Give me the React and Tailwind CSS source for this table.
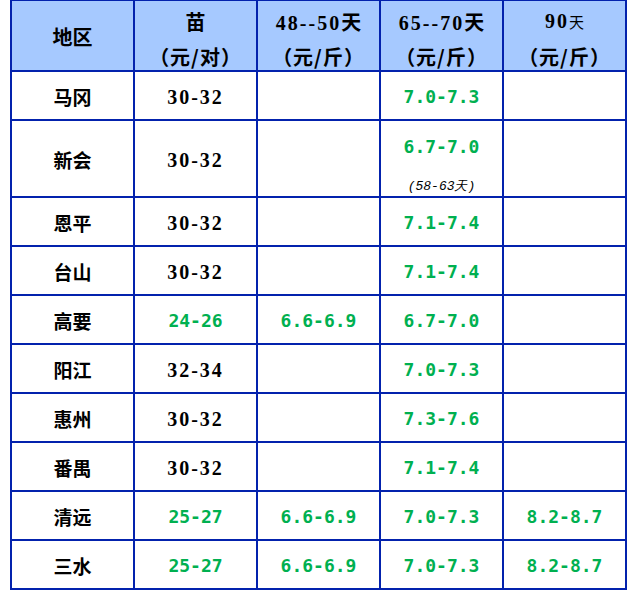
const CJK = '"Noto Sans CJK SC", sans-serif';

const ROWS = [
    { area: '马冈', seed: '30-32', p48: '', p65: '7.0-7.3', p90: '' },
    { area: '新会', seed: '30-32', p48: '', p65: '6.7-7.0', p90: '', note: '(58-63天)' },
    { area: '恩平', seed: '30-32', p48: '', p65: '7.1-7.4', p90: '' },
    { area: '台山', seed: '30-32', p48: '', p65: '7.1-7.4', p90: '' },
    { area: '高要', seed: '24-26', seedGreen: true, p48: '6.6-6.9', p65: '6.7-7.0', p90: '' },
    { area: '阳江', seed: '32-34', p48: '', p65: '7.0-7.3', p90: '' },
    { area: '惠州', seed: '30-32', p48: '', p65: '7.3-7.6', p90: '' },
    { area: '番禺', seed: '30-32', p48: '', p65: '7.1-7.4', p90: '' },
    { area: '清远', seed: '25-27', seedGreen: true, p48: '6.6-6.9', p65: '7.0-7.3', p90: '8.2-8.7' },
    { area: '三水', seed: '25-27', seedGreen: true, p48: '6.6-6.9', p65: '7.0-7.3', p90: '8.2-8.7' },
];

const Green = ({ children }) => (
    <span className="text-[18px] font-bold leading-[24px] text-[#00b050] font-['DejaVu_Sans_Mono',monospace]">{children}</span>
);

const Black = ({ children }) => (
    <span className="text-[20px] font-bold leading-[24px] tracking-[2px] text-black font-['Liberation_Serif',serif]">{children}</span>
);

const Head = ({ top, unit }) => (
    <div className="flex flex-col items-center pt-[3px] leading-[35px] font-bold text-black bg-[#a6c9ff]">
        <div className="h-[35px]">{top}</div>
        <div className="h-[35px] text-[20px] tracking-[1px]" style={{ fontFamily: CJK }}>（元/{unit}）</div>
    </div>
);

const Num = ({ children }) => (
    <span className="text-[20px] font-bold tracking-[2px] font-['Liberation_Serif',serif]">{children}</span>
);

const Tian = () => <span className="text-[20px] font-bold" style={{ fontFamily: CJK }}>天</span>;

export default function App() {
    return (
        <div className="w-[643px] h-[591px] bg-white">
            <div className="ml-[10px] -mt-px w-[617px] grid grid-cols-[repeat(5,121px)] grid-rows-[69px_47px_75px_repeat(8,47px)] gap-[2px] p-[2px] bg-[#0322ad]">
                <div className="flex items-center justify-center bg-[#a6c9ff] pt-[2px] text-[20px] font-bold text-black" style={{ fontFamily: CJK }}>
                    地区
                </div>
                <Head top={<span className="text-[20px]" style={{ fontFamily: CJK }}>苗</span>} unit="对" />
                <Head top={<><Num>48--50</Num><Tian /></>} unit="斤" />
                <Head top={<><Num>65--70</Num><Tian /></>} unit="斤" />
                <Head top={<><Num>90</Num><span className="text-[15px] font-normal" style={{ fontFamily: CJK }}>天</span></>} unit="斤" />

                {ROWS.map(r => (
                    <div key={r.area} className="contents">
                        <div className="flex items-center justify-center bg-white pt-[3px] text-[19px] font-bold text-black" style={{ fontFamily: CJK }}>
                            {r.area}
                        </div>
                        <div className="flex items-center justify-center bg-white pt-[3px]">
                            {r.seedGreen ? <Green>{r.seed}</Green> : <Black>{r.seed}</Black>}
                        </div>
                        <div className="flex items-center justify-center bg-white pt-[3px]">
                            {r.p48 && <Green>{r.p48}</Green>}
                        </div>
                        {r.note ? (
                            <div className="flex flex-col items-center bg-white pt-[14px]">
                                <Green>{r.p65}</Green>
                                <span className="mt-[20px] text-[13px] italic leading-[16px] text-black font-['Liberation_Mono',monospace]">{r.note}</span>
                            </div>
                        ) : (
                            <div className="flex items-center justify-center bg-white pt-[3px]">
                                <Green>{r.p65}</Green>
                            </div>
                        )}
                        <div className="flex items-center justify-center bg-white pt-[3px]">
                            {r.p90 && <Green>{r.p90}</Green>}
                        </div>
                    </div>
                ))}
            </div>
        </div>
    );
}
